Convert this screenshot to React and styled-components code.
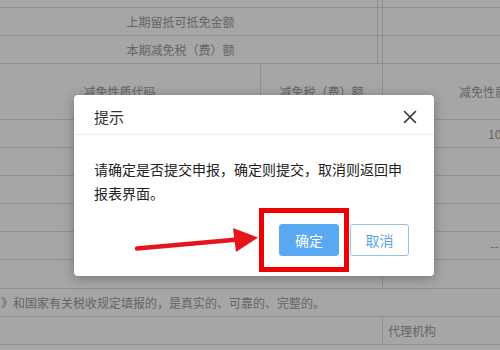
import styled, { createGlobalStyle } from "styled-components"

const GlobalStyle = createGlobalStyle`
  html, body {
    margin: 0;
    padding: 0;
    width: 500px;
    height: 350px;
    overflow: hidden;
    background: #fff;
    font-family: "Noto Sans CJK SC", "Noto Sans", sans-serif;
  }
`

export default function App() {
    return (
        <Page>
            <GlobalStyle />
            <Table>
                <Row h={8}>
                    <Cell w={378} divider />
                    <Gap />
                    <Cell w={117} left />
                </Row>
                <Row h={28}>
                    <Cell w={378} divider center pr={16}>上期留抵可抵免金额</Cell>
                    <Gap />
                    <Cell w={117} left />
                </Row>
                <Row h={28}>
                    <Cell w={378} divider center pr={16}>本期减免税（费）额</Cell>
                    <Gap />
                    <Cell w={117} left />
                </Row>
                <Row h={56}>
                    <Cell w={261} divider center pr={21}>减免性质代码</Cell>
                    <Cell w={122} divider center>减免税（费）额</Cell>
                    <Cell w={117} pl={76}>减免性质代码</Cell>
                </Row>
                {["100", "", "", "", "--", ""].map((v, i) => (
                    <Row h={i === 5 ? 29 : 28} key={i}>
                        <Cell w={261} />
                        <Cell w={122} divider />
                        <Cell w={117} pl={v === "--" ? 107 : 105}>{v}</Cell>
                    </Row>
                ))}
                <Row h={28}>
                    <Cell w={500} pl={1}>》和国家有关税收规定填报的，是真实的、可靠的、完整的。</Cell>
                </Row>
                <Row h={28}>
                    <Cell w={383} divider />
                    <Cell w={117} pl={5}>代理机构</Cell>
                </Row>
            </Table>

            <Mask />

            <Dialog>
                <DialogHeader>
                    <Title>提示</Title>
                    <CloseButton aria-label="close">
                        <svg width="14" height="14" viewBox="0 0 14 14">
                            <path d="M1.5 1.5 L12.5 12.5 M12.5 1.5 L1.5 12.5" stroke="#333" strokeWidth="1.6" strokeLinecap="round" />
                        </svg>
                    </CloseButton>
                </DialogHeader>
                <DialogBody>
                    请确定是否提交申报，确定则提交，取消则返回申报表界面。
                </DialogBody>
                <DialogFooter>
                    <Highlight>
                        <Button primary>确定</Button>
                    </Highlight>
                    <Button>取消</Button>
                </DialogFooter>
            </Dialog>

            <Arrow width="500" height="350" viewBox="0 0 500 350">
                <line x1="137" y1="248.5" x2="238" y2="239.5" stroke="#e8141c" strokeWidth="4.5" strokeLinecap="round" />
                <polygon points="258,237.5 233,228 236,252" fill="#e8141c" />
            </Arrow>
        </Page>
    )
}

const Page = styled.div`
    position: relative;
    width: 500px;
    height: 350px;
    overflow: hidden;
    background: #fff;
`

const Table = styled.div`
    display: flex;
    flex-direction: column;
    font-size: 12px;
    color: #9c9c9c;
`

const Row = styled.div`
    display: flex;
    height: ${p => p.h}px;
    border-bottom: 1px solid #dcdcdc;
    box-sizing: border-box;
    flex: none;
`

const Cell = styled.div`
    width: ${p => p.w}px;
    flex: none;
    box-sizing: border-box;
    display: flex;
    align-items: center;
    justify-content: ${p => (p.center ? "center" : "flex-start")};
    padding-left: ${p => p.pl || 0}px;
    padding-right: ${p => p.pr || 0}px;
    border-right: ${p => (p.divider ? "1px solid #dcdcdc" : "none")};
    border-left: ${p => (p.left ? "1px solid #dcdcdc" : "none")};
    white-space: nowrap;
    overflow: hidden;
`

const Gap = styled.div`
    width: 4px;
    flex: none;
`

const Mask = styled.div`
    position: absolute;
    inset: 0;
    background: rgba(0, 0, 0, 0.35);
`

const Dialog = styled.div`
    position: absolute;
    left: 74px;
    top: 95px;
    width: 360px;
    background: #fff;
    border-radius: 4px;
    box-shadow: 0 2px 12px rgba(0, 0, 0, 0.3);
    box-sizing: border-box;
`

const DialogHeader = styled.div`
    display: flex;
    align-items: center;
    justify-content: space-between;
    height: 40px;
    padding: 4px 17px 0 20px;
    box-sizing: border-box;
    border-bottom: 1px solid #ebebeb;
`

const Title = styled.span`
    font-size: 15px;
    color: #333;
`

const CloseButton = styled.button`
    border: none;
    background: none;
    padding: 0;
    width: 14px;
    height: 14px;
    display: flex;
    cursor: pointer;
`

const DialogBody = styled.div`
    padding: 22px 30px 0 20px;
    font-size: 14px;
    line-height: 24px;
    color: #222;
`

const DialogFooter = styled.div`
    display: flex;
    justify-content: flex-end;
    align-items: center;
    gap: 1px;
    padding: 3px 25px 4px 0;
`

const Highlight = styled.div`
    border: 5px solid #ee0000;
    padding: 11px 5px 11px 15px;
`

const Button = styled.button`
    width: ${p => (p.primary ? 60 : 59)}px;
    height: 32px;
    box-sizing: border-box;
    border-radius: 3px;
    font-family: inherit;
    font-size: 14px;
    cursor: pointer;
    border: 1px solid ${p => (p.primary ? "#58a9f2" : "#8ec4f0")};
    background: ${p => (p.primary ? "#58a9f2" : "#fff")};
    color: ${p => (p.primary ? "#fff" : "#5aa3e8")};
`

const Arrow = styled.svg`
    position: absolute;
    left: 0;
    top: 0;
    pointer-events: none;
`
